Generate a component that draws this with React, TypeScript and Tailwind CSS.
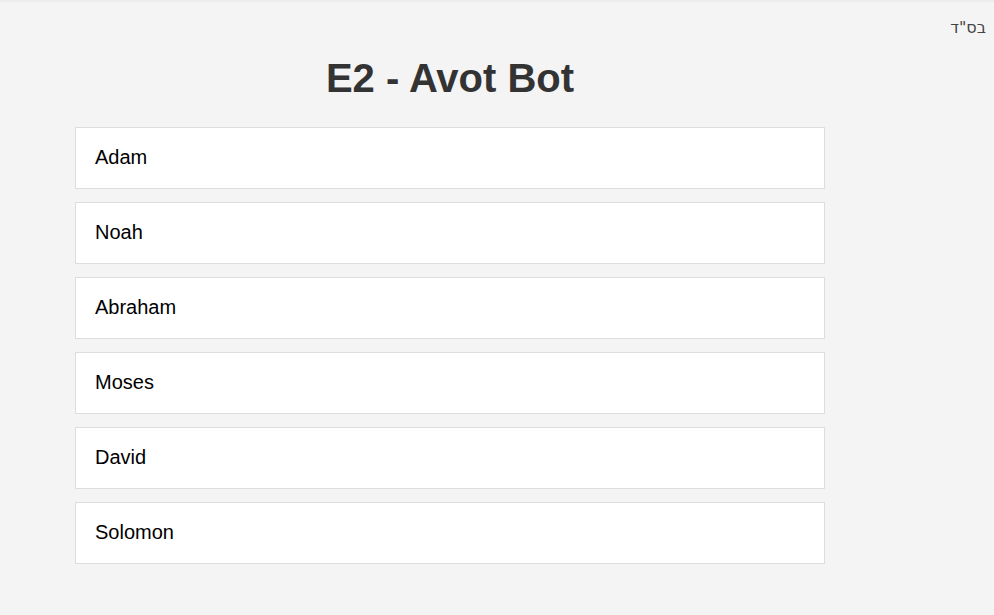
const names = ["Adam", "Noah", "Abraham", "Moses", "David", "Solomon"];

export default function App() {
  return (
    <div
      className="relative min-h-[615px] w-full bg-[#f4f4f4] border-t-2 border-[#ececec]"
      style={{ fontFamily: '"Liberation Sans", Arial, sans-serif' }}
    >
      <div
        dir="rtl"
        className="absolute right-[8px] top-[14px] text-[16px] text-[#444]"
        style={{ fontFamily: '"DejaVu Sans", "Liberation Sans", sans-serif' }}
      >
        בס"ד
      </div>
      <div className="flex w-[750px] flex-col ml-[75px]">
        <h1 className="mt-[52px] mb-[25px] text-center text-[40px] font-bold leading-[48px] text-[#333]">
          E2 - Avot Bot
        </h1>
        <div className="flex flex-col gap-[13px]">
          {names.map((name) => (
            <div
              key={name}
              className="flex h-[62px] items-center border border-[#ddd] bg-white pl-[19px] pb-[2px] text-[20px] text-black"
            >
              {name}
            </div>
          ))}
        </div>
      </div>
    </div>
  );
}
